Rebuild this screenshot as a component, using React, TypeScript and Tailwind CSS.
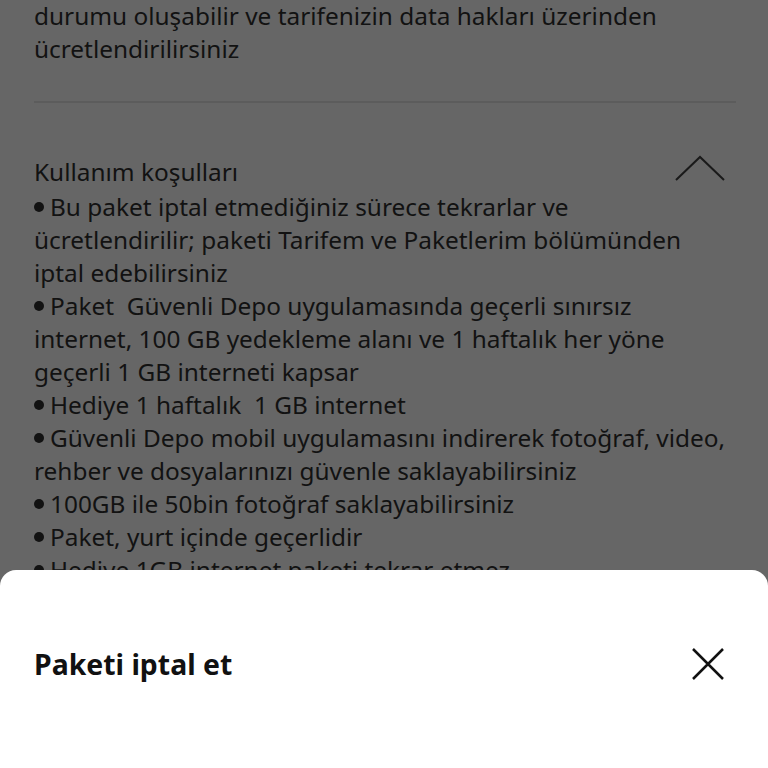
import React from "react";

const lines: [boolean, string][] = [
  [true, "Bu paket iptal etmediğiniz sürece tekrarlar ve"],
  [false, "ücretlendirilir; paketi Tarifem ve Paketlerim bölümünden"],
  [false, "iptal edebilirsiniz"],
  [true, "Paket  Güvenli Depo uygulamasında geçerli sınırsız"],
  [false, "internet, 100 GB yedekleme alanı ve 1 haftalık her yöne"],
  [false, "geçerli 1 GB interneti kapsar"],
  [true, "Hediye 1 haftalık  1 GB internet"],
  [true, "Güvenli Depo mobil uygulamasını indirerek fotoğraf, video,"],
  [false, "rehber ve dosyalarınızı güvenle saklayabilirsiniz"],
  [true, "100GB ile 50bin fotoğraf saklayabilirsiniz"],
  [true, "Paket, yurt içinde geçerlidir"],
  [true, "Hediye 1GB internet paketi tekrar etmez"],
  [true, "Paket aylık olarak yenilenir"],
];

export default function App() {
  return (
    <div
      className="relative w-[768px] h-[768px] overflow-hidden bg-[#666666] text-[#121212]"
      style={{ fontFamily: "'Noto Sans', sans-serif" }}
    >
      <div className="px-[34px] -mt-[1px]">
        <div className="text-[24.4px] leading-[33px] whitespace-pre">
          {"durumu oluşabilir ve tarifenizin data hakları üzerinden\nücretlendirilirsiniz"}
        </div>
        <div className="mt-[36px] h-[2px] bg-[#5c5c5c] w-[702px]" />
        <div className="mt-[52px] flex items-start justify-between">
          <div className="text-[24.4px] leading-[33px]">Kullanım koşulları</div>
          <svg width="52" height="28" viewBox="0 0 52 28" className="mr-[8px] -mt-[1px]">
            <path d="M2 26 L26 3 L50 26" fill="none" stroke="#1a1a1a" strokeWidth="2" />
          </svg>
        </div>
        <div className="mt-[2px] text-[24.4px] leading-[33px] whitespace-pre">
          {lines.map(([b, t], i) => (
            <div key={i} className="flex items-center">
              {b && <span className="inline-block w-[10px] h-[10px] rounded-full bg-[#121212] mr-[6px] mt-[1px]" />}
              <span>{t}</span>
            </div>
          ))}
        </div>
      </div>
      <div className="absolute left-0 right-0 top-[570px] bottom-0 bg-white rounded-t-[16px]">
        <div className="flex items-center justify-between px-[34px] pt-[76px]">
          <div className="text-[28.4px] leading-[36px] font-bold text-[#111111]">Paketi iptal et</div>
          <svg width="32" height="32" viewBox="0 0 32 32" className="mr-[10px]">
            <path d="M1 1 L31 31 M31 1 L1 31" fill="none" stroke="#111111" strokeWidth="2.5" />
          </svg>
        </div>
      </div>
    </div>
  );
}
